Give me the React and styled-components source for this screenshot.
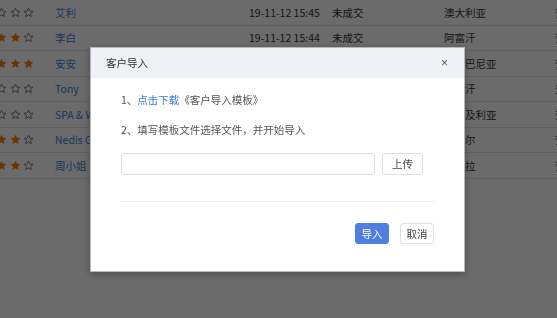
import styled, { createGlobalStyle } from "styled-components";

const GlobalStyle = createGlobalStyle`
  html, body {
    margin: 0;
    padding: 0;
    background: #ffffff;
    overflow: hidden;
  }
  body {
    font-family: "Noto Sans CJK SC", "Liberation Sans", sans-serif;
    font-size: 10.5px;
    color: #333;
  }
`;

const rows = [
  { stars: 0, name: "艾利", time: "19-11-12 15:45", status: "未成交", country: "澳大利亚" },
  { stars: 2, name: "李白", time: "19-11-12 15:44", status: "未成交", country: "阿富汗" },
  { stars: 3, name: "安安", time: "19-11-12 15:40", status: "未成交", country: "阿尔巴尼亚" },
  { stars: 0, name: "Tony", time: "19-11-12 15:38", status: "未成交", country: "阿富汗" },
  { stars: 0, name: "SPA & Wellness", time: "19-11-12 15:30", status: "未成交", country: "阿尔及利亚" },
  { stars: 2, name: "Nedis Oy", time: "19-11-12 15:21", status: "未成交", country: "安道尔" },
  { stars: 2, name: "周小姐", time: "19-11-12 15:12", status: "未成交", country: "安哥拉" },
];

function Star({ filled }) {
  return (
    <StarSvg viewBox="0 0 24 24" width="11" height="11">
      <path
        d="M12 2.5l2.9 6.3 6.9.7-5.2 4.6 1.5 6.8L12 17.4l-6.1 3.5 1.5-6.8-5.2-4.6 6.9-.7z"
        fill={filled ? "#ff7a00" : "none"}
        stroke={filled ? "#ff7a00" : "#555"}
        strokeWidth={filled ? 1 : 1.6}
        strokeLinejoin="round"
      />
    </StarSvg>
  );
}

function App() {
  return (
    <>
      <GlobalStyle />
      <Page>
        <Table>
          {rows.map((r, i) => (
            <Row key={i}>
              <Stars>
                {[0, 1, 2].map((s) => (
                  <Star key={s} filled={s < r.stars} />
                ))}
              </Stars>
              <NameCell>{r.name}</NameCell>
              <Cell>{r.time}</Cell>
              <Cell>{r.status}</Cell>
              <Cell>{r.country}</Cell>
              <Cell>查看</Cell>
            </Row>
          ))}
        </Table>
      </Page>
      <Overlay>
        <Modal>
          <ModalHeader>
            <ModalTitle>客户导入</ModalTitle>
            <CloseButton>×</CloseButton>
          </ModalHeader>
          <ModalBody>
            <Step>
              1、<Link>点击下载</Link>《客户导入模板》
            </Step>
            <Step>2、填写模板文件选择文件，并开始导入</Step>
            <UploadRow>
              <FileInput />
              <Button>上传</Button>
            </UploadRow>
            <Divider />
            <Footer>
              <Button primary>导入</Button>
              <Button>取消</Button>
            </Footer>
          </ModalBody>
        </Modal>
      </Overlay>
    </>
  );
}

const Page = styled.div`
  width: 557px;
  height: 318px;
  overflow: hidden;
`;

const Table = styled.div`
  display: flex;
  flex-direction: column;
`;

const Row = styled.div`
  display: grid;
  grid-template-columns: 55px 194px 83px 112px 111px 60px;
  align-items: center;
  height: 24.5px;
  border-bottom: 1px solid #e2e2e2;
  white-space: nowrap;
`;

const Stars = styled.div`
  display: flex;
  gap: 2.5px;
  margin-left: -4px;
`;

const StarSvg = styled.svg`
  display: block;
`;

const Cell = styled.div`
  color: #333;
  overflow: hidden;
`;

const NameCell = styled(Cell)`
  color: #3a82d0;
`;

const Overlay = styled.div`
  position: fixed;
  inset: 0;
  background: rgba(0, 0, 0, 0.58);
  display: flex;
  align-items: center;
  justify-content: center;
`;

const Modal = styled.div`
  width: 375px;
  height: 225px;
  box-sizing: border-box;
  background: #fff;
  border: 1px solid #b8b8b8;
  box-shadow: 0 2px 8px rgba(0, 0, 0, 0.3);
  display: flex;
  flex-direction: column;
  margin-left: -2px;
`;

const ModalHeader = styled.div`
  height: 30px;
  background: #eef2f6;
  display: flex;
  align-items: center;
  justify-content: space-between;
  padding: 0 16px 0 15px;
`;

const ModalTitle = styled.div`
  font-size: 10.5px;
  color: #333;
`;

const CloseButton = styled.div`
  font-family: "Liberation Sans", sans-serif;
  font-size: 12px;
  color: #555;
  line-height: 1;
`;

const ModalBody = styled.div`
  padding: 12px 30px 0 30px;
  display: flex;
  flex-direction: column;
`;

const Step = styled.div`
  line-height: 20px;
  color: #555;
  margin-bottom: 10px;
`;

const Link = styled.span`
  color: #3b7dd8;
`;

const UploadRow = styled.div`
  display: flex;
  gap: 7px;
  margin-top: 3px;
`;

const FileInput = styled.div`
  width: 254px;
  height: 22px;
  box-sizing: border-box;
  border: 1px solid #dedede;
  border-radius: 3px;
`;

const Button = styled.div`
  height: ${(p) => (p.primary ? "21px" : "22px")};
  min-width: 34px;
  padding: 0 ${(p) => (p.primary ? "0" : "9px")};
  box-sizing: border-box;
  display: flex;
  align-items: center;
  justify-content: center;
  border-radius: 3px;
  border: 1px solid ${(p) => (p.primary ? "#4f80e1" : "#e0e0e0")};
  background: ${(p) => (p.primary ? "#4f80e1" : "#fff")};
  color: ${(p) => (p.primary ? "#fff" : "#444")};
  font-size: 10.5px;
`;

const Divider = styled.div`
  margin-top: 26px;
  border-top: 1px dotted #dcdcdc;
`;

const Footer = styled.div`
  display: flex;
  justify-content: flex-end;
  gap: 11px;
  margin-top: 21px;

  & > div {
    width: 34px;
    padding: 0;
    height: 21px;
  }
`;

export default App;
